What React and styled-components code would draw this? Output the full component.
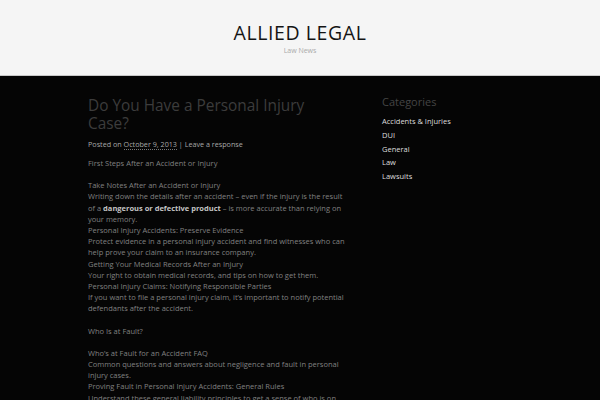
import React from 'react';
import styled, { createGlobalStyle } from 'styled-components';

const GlobalStyle = createGlobalStyle`
    html, body {
        margin: 0;
        padding: 0;
        background: #050505;
        font-family: "Open Sans", "DejaVu Sans", sans-serif;
        -webkit-font-smoothing: antialiased;
    }
`;

const categories = ['Accidents & Injuries', 'DUI', 'General', 'Law', 'Lawsuits'];

const App = () => {
    return (
        <Page>
            <GlobalStyle />
            <Header>
                <SiteTitle>ALLIED LEGAL</SiteTitle>
                <Tagline>Law News</Tagline>
            </Header>
            <Main>
                <Article>
                    <PostTitle>Do You Have a Personal Injury Case?</PostTitle>
                    <Meta>
                        Posted on <a href="#">October 9, 2013</a> | <span>Leave a response</span>
                    </Meta>
                    <Para>First Steps After an Accident or Injury</Para>
                    <Para>
                        Take Notes After an Accident or Injury<br />
                        Writing down the details after an accident – even if the injury is the result of a <strong>dangerous or defective product</strong> – is more accurate than relying on your memory.<br />
                        Personal Injury Accidents: Preserve Evidence<br />
                        Protect evidence in a personal injury accident and find witnesses who can help prove your claim to an insurance company.<br />
                        Getting Your Medical Records After an Injury<br />
                        Your right to obtain medical records, and tips on how to get them.<br />
                        Personal Injury Claims: Notifying Responsible Parties<br />
                        If you want to file a personal injury claim, it’s important to notify potential defendants after the accident.
                    </Para>
                    <Para>Who Is at Fault?</Para>
                    <Para>
                        Who’s at Fault for an Accident FAQ<br />
                        Common questions and answers about negligence and fault in personal injury cases.<br />
                        Proving Fault in Personal Injury Accidents: General Rules<br />
                        Understand these general liability principles to get a sense of who is on the hook for your injuries.
                    </Para>
                </Article>
                <Sidebar>
                    <WidgetTitle>Categories</WidgetTitle>
                    <CatList>
                        {categories.map((name) => (
                            <li key={name}>
                                <a href="#">{name}</a>
                            </li>
                        ))}
                    </CatList>
                </Sidebar>
            </Main>
        </Page>
    );
};

const Page = styled.div`
    width: 600px;
    height: 400px;
    overflow: hidden;
    background: #050505;
`;

const Header = styled.header`
    height: 76px;
    background: #f5f5f5;
    border-bottom: 1px solid #c8c8c8;
    display: flex;
    flex-direction: column;
    align-items: center;
    padding-top: 21px;
    box-sizing: border-box;
`;

const SiteTitle = styled.h1`
    margin: 0;
    font-size: 19.5px;
    font-weight: 400;
    line-height: 24px;
    letter-spacing: 0.6px;
    color: #141414;
`;

const Tagline = styled.div`
    margin-top: 1px;
    font-size: 7px;
    line-height: 10px;
    color: #aaa;
`;

const Main = styled.div`
    display: flex;
    gap: 36px;
    padding: 21px 0 0 88px;
`;

const Article = styled.article`
    width: 258px;
`;

const PostTitle = styled.h2`
    margin: 0 0 6px;
    font-size: 15.4px;
    font-weight: 400;
    line-height: 18px;
    color: #3c3c3c;
`;

const Meta = styled.div`
    font-size: 7.2px;
    line-height: 10px;
    color: #a8a8a8;
    margin-bottom: 9px;
    a {
        color: #a8a8a8;
        text-decoration: none;
        border-bottom: 1px dotted #777;
    }
`;

const Para = styled.p`
    margin: 0 0 11px;
    font-size: 7.5px;
    line-height: 11.2px;
    color: #808080;
    strong {
        color: #c4c4c4;
        font-weight: 700;
    }
`;

const Sidebar = styled.aside`
    width: 140px;
    margin-top: -2px;
`;

const WidgetTitle = styled.h3`
    margin: 0 0 6px;
    font-size: 11px;
    font-weight: 400;
    line-height: 14px;
    color: #444;
`;

const CatList = styled.ul`
    list-style: none;
    margin: 0;
    padding: 0;
    li {
        font-size: 7.5px;
        line-height: 13.8px;
    }
    a {
        color: #ddd;
        text-decoration: none;
    }
`;

export default App;
